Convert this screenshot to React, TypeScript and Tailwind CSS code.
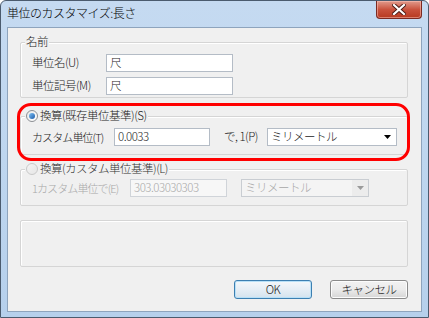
const font = { fontFamily: '"Noto Sans CJK JP", "Noto Sans", sans-serif' };

function Radio({ checked, disabled }: { checked?: boolean; disabled?: boolean }) {
  return (
    <span
      className={
        "w-[12px] h-[12px] rounded-full border flex items-center justify-center shrink-0 " +
        (disabled
          ? "border-[#c9c9c9] bg-gradient-to-br from-[#f4f4f4] to-[#e6e6e6]"
          : "border-[#8c8f94] bg-gradient-to-br from-[#e9e9e9] to-[#ffffff]")
      }
    >
      {checked && (
        <span className="w-[6px] h-[6px] rounded-full bg-gradient-to-br from-[#7fc2f5] to-[#1c5aa8]" />
      )}
    </span>
  );
}

function Group({
  legend,
  children,
  className,
}: {
  legend?: React.ReactNode;
  children?: React.ReactNode;
  className?: string;
}) {
  return (
    <div className={"relative border border-[#d5d5d5] rounded-[2px] shadow-[inset_1px_1px_0_#ffffff] " + (className ?? "")}>
      {legend && (
        <div className="absolute left-[4px] -top-[8px] h-[14px] flex items-center gap-[2px] bg-[#f0f0f0] px-[1px] leading-none">
          {legend}
        </div>
      )}
      {children}
    </div>
  );
}

function Arrow({ gray }: { gray?: boolean }) {
  return (
    <svg width="7" height="4" viewBox="0 0 7 4">
      <path d="M0 0 H7 L3.5 4 Z" fill={gray ? "#9a9a9a" : "#000"} />
    </svg>
  );
}

export default function App() {
  return (
    <div className="w-[429px] h-[318px] bg-white text-[#1a1a1a] font-light tracking-[-0.5px]" style={font}>
      <div className="w-full h-full rounded-t-[6px] border border-[#4b5b6e] bg-gradient-to-b from-[#c5daf1] via-[#bed6ef] to-[#b6d0ec] flex flex-col">
        {/* title bar */}
        <div className="h-[26px] flex items-start">
          <span className="pl-[6px] pt-[5px] text-[12px] leading-[14px] text-black">単位のカスタマイズ:長さ</span>
          <div className="ml-auto mr-[6px] w-[46px] h-[18px] rounded-b-[4px] border border-t-0 border-[#7b2a22] bg-gradient-to-b from-[#e09a8c] via-[#c9523d] to-[#b7391f] flex items-center justify-center shadow-[inset_0_0_0_1px_rgba(255,200,190,0.5)]">
            <svg width="14" height="11" viewBox="0 0 14 11">
              <path d="M2 1 L12 10 M12 1 L2 10" stroke="#4a1a14" strokeWidth="4" strokeLinecap="square" />
              <path d="M2 1 L12 10 M12 1 L2 10" stroke="#ffffff" strokeWidth="2.2" strokeLinecap="square" />
            </svg>
          </div>
        </div>

        {/* client area */}
        <div className="relative mx-[6px] mb-[5px] flex-1 border border-[#8ea4bd] bg-[#f0f0f0] pl-[12px] pr-[13px] pt-[14px] flex flex-col text-[11.5px]">
          {/* 名前 */}
          <Group legend={<span>名前</span>} className="pt-[11px] pb-[2px] pl-[11px]">
            <div className="flex items-center h-[18px]">
              <span className="w-[74px]">単位名(U)</span>
              <div className="w-[127px] h-[18px] border border-[#b4bcc6] bg-white pl-[3px] flex items-center">尺</div>
            </div>
            <div className="flex items-center h-[18px] mt-[5px]">
              <span className="w-[74px]">単位記号(M)</span>
              <div className="w-[127px] h-[18px] border border-[#b4bcc6] bg-white pl-[3px] flex items-center">尺</div>
            </div>
          </Group>

          {/* 換算(既存単位基準) */}
          <Group
            legend={
              <>
                <Radio checked />
                <span>換算(既存単位基準)(S)</span>
              </>
            }
            className="mt-[18px] pt-[11px] pb-[8px] pl-[11px]"
          >
            <div className="flex items-center h-[18px]">
              <span className="w-[82px] text-[11px] tracking-[-0.9px]">カスタム単位(T)</span>
              <div className="w-[96px] h-[18px] border border-[#b4bcc6] bg-white pl-[3px] flex items-center">0.0033</div>
              <span className="ml-[14px] w-[43px]">で, 1(P)</span>
              <div className="w-[130px] h-[18px] border border-[#b4bcc6] bg-white pl-[3px] pr-[5px] flex items-center justify-between">
                <span>ミリメートル</span>
                <Arrow />
              </div>
            </div>
          </Group>

          {/* 換算(カスタム単位基準) */}
          <Group
            legend={
              <>
                <Radio disabled />
                <span className="text-[#333]">換算(カスタム単位基準)(L)</span>
              </>
            }
            className="mt-[14px] pt-[9px] pb-[8px] pl-[11px]"
          >
            <div className="flex items-center h-[18px] text-[#a8a8a8]">
              <span className="w-[98px] text-[11px] tracking-[-0.9px]">1カスタム単位で(E)</span>
              <div className="w-[97px] h-[18px] border border-[#d0d4d9] bg-[#f7f7f7] pl-[3px] flex items-center">303.03030303</div>
              <div className="ml-[14px] w-[128px] h-[18px] border border-[#c9cdd2] bg-[#f4f4f4] pl-[3px] flex items-center justify-between">
                <span>ミリメートル</span>
                <div className="w-[16px] h-full flex items-center justify-center bg-[#ececec]">
                  <Arrow gray />
                </div>
              </div>
            </div>
          </Group>

          {/* empty group */}
          <Group className="mt-[14px] h-[47px]" />

          {/* buttons */}
          <div className="mt-[13px] flex justify-end gap-[18px]">
            <div className="w-[78px] h-[19px] rounded-[3px] border border-[#3c7fb1] bg-gradient-to-b from-[#f4f8fb] via-[#e6eef5] to-[#d4e3ee] flex items-center justify-center shadow-[inset_0_0_0_1px_#b8e0f7]">
              OK
            </div>
            <div className="w-[78px] h-[19px] rounded-[3px] border border-[#8a8a8a] bg-gradient-to-b from-[#f2f2f2] via-[#ebebeb] to-[#d6d6d6] flex items-center justify-center shadow-[inset_0_0_0_1px_#fcfcfc]">
              キャンセル
            </div>
          </div>

          {/* red annotation */}
          <div className="absolute left-[9px] top-[75px] w-[393px] h-[58px] rounded-[14px] border-[3px] border-[#ff0000] pointer-events-none" />
        </div>
      </div>
    </div>
  );
}
